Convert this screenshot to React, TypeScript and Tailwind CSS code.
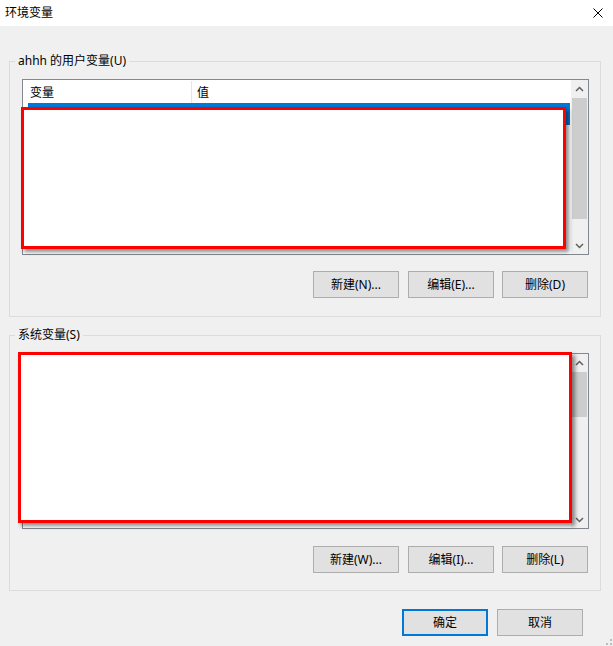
import { ReactNode } from "react";

const FONT = "font-['Noto_Sans','Noto_Sans_CJK_SC',sans-serif]";

function Chevron({ up }: { up?: boolean }) {
  return (
    <svg width="9" height="6" viewBox="0 0 9 6" className="block">
      <polyline
        points={up ? "1,5 4.5,1.5 8,5" : "1,1 4.5,4.5 8,1"}
        fill="none"
        stroke="#606060"
        strokeWidth="1.5"
      />
    </svg>
  );
}

function ScrollBar({ thumbTop, thumbHeight }: { thumbTop: number; thumbHeight: number }) {
  return (
    <div className="flex w-[17px] flex-col bg-[#f0f0f0]">
      <div className="flex h-[18px] items-center justify-center">
        <Chevron up />
      </div>
      <div className="relative flex-1">
        <div
          className="absolute left-px right-px bg-[#cdcdcd]"
          style={{ top: thumbTop, height: thumbHeight }}
        />
      </div>
      <div className="flex h-[17px] items-center justify-center">
        <Chevron />
      </div>
    </div>
  );
}

function ListBox({ thumbTop, thumbHeight }: { thumbTop: number; thumbHeight: number }) {
  return (
    <div className="ml-[12px] mt-[10px] flex h-[176px] w-[567px] border border-[#828790] bg-white">
      <div className="flex flex-1 flex-col">
        <div className="flex h-[23px] pt-px text-[12px] leading-[23px]">
          <div className="w-[169px] border-r border-[#e5e5e5] pl-[7px]">变量</div>
          <div className="pl-[5px]">值</div>
        </div>
        <div className="ml-[5px] mr-px h-[22px] bg-[#0078d7]" />
      </div>
      <ScrollBar thumbTop={thumbTop} thumbHeight={thumbHeight} />
    </div>
  );
}

function Button({ children, primary, className }: { children: ReactNode; primary?: boolean; className?: string }) {
  return (
    <button
      className={`flex h-[27px] w-[86px] items-center justify-center bg-[#e1e1e1] text-[12px] text-black ${
        primary ? "border-2 border-[#0078d7]" : "border border-[#adadad]"
      } ${className ?? ""}`}
    >
      {children}
    </button>
  );
}

function GroupBox({ label, children, className }: { label: string; children: ReactNode; className?: string }) {
  return (
    <fieldset className={`w-[592px] border border-[#dcdcdc] ${className ?? ""}`}>
      <legend className="ml-[5px] px-[3px] text-[12px] leading-[16px]">{label}</legend>
      {children}
    </fieldset>
  );
}

export default function App() {
  return (
    <div className={`relative h-[646px] w-[613px] overflow-hidden bg-[#f0f0f0] text-black ${FONT}`}>
      <div className="flex h-[26px] items-center justify-between bg-white pl-[5px] pr-[10px]">
        <span className="text-[12px] leading-[16px]">环境变量</span>
        <svg width="10" height="10" viewBox="0 0 10 10">
          <path d="M0.5 0.5 L9.5 9.5 M9.5 0.5 L0.5 9.5" stroke="#000" strokeWidth="1" />
        </svg>
      </div>

      <div className="flex flex-col pl-[9px] pt-[27px]">
        <GroupBox label="ahhh 的用户变量(U)" className="pb-[18px]">
          <ListBox thumbTop={0} thumbHeight={121} />
          <div className="mr-[12px] mt-[16px] flex justify-end gap-[8px]">
            <Button className="mr-px">新建(N)...</Button>
            <Button>编辑(E)...</Button>
            <Button>删除(D)</Button>
          </div>
        </GroupBox>

        <GroupBox label="系统变量(S)" className="mt-[10px] pb-[17px]">
          <ListBox thumbTop={0} thumbHeight={45} />
          <div className="mr-[12px] mt-[17px] flex justify-end gap-[8px]">
            <Button className="mr-px">新建(W)...</Button>
            <Button>编辑(I)...</Button>
            <Button>删除(L)</Button>
          </div>
        </GroupBox>

        <div className="mt-[18px] flex justify-end gap-[9px] pr-[30px]">
          <Button primary>确定</Button>
          <Button>取消</Button>
        </div>
      </div>

      {/* redaction boxes */}
      <div className="absolute left-[21px] top-[107px] h-[142px] w-[545px] border-[3px] border-[#ff0000] bg-white shadow-[3px_3px_4px_rgba(0,0,0,0.45)]" />
      <div className="absolute left-[18px] top-[352px] h-[171px] w-[554px] border-[3px] border-[#ff0000] bg-white shadow-[3px_3px_4px_rgba(0,0,0,0.45)]" />

      <svg className="absolute bottom-0 right-0" width="12" height="12" viewBox="0 0 12 12">
        <rect x="9" y="9" width="2" height="2" fill="#bcbcbc" />
        <rect x="5" y="9" width="2" height="2" fill="#bcbcbc" />
        <rect x="9" y="5" width="2" height="2" fill="#bcbcbc" />
      </svg>
    </div>
  );
}
